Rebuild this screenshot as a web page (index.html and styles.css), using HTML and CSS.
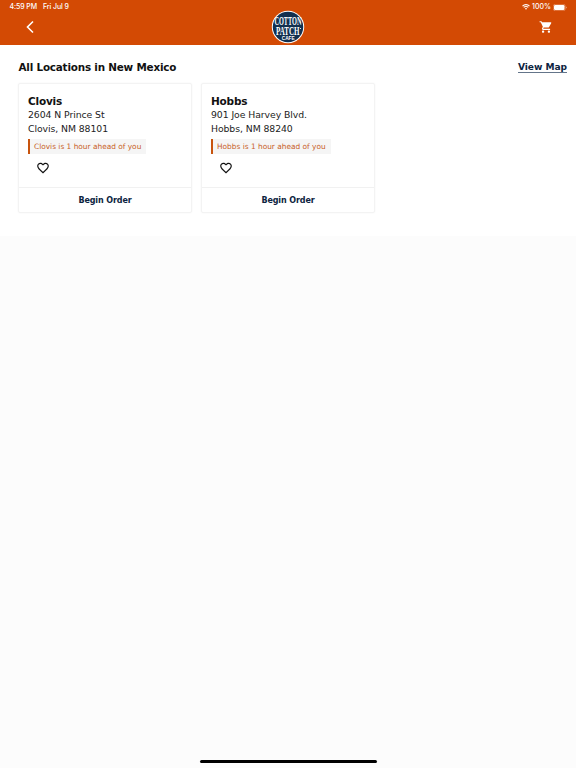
FILE: index.html
```html
<!DOCTYPE html>
<html lang="en">
<head>
<meta charset="utf-8">
<title>Cotton Patch Cafe – Locations</title>
<link rel="stylesheet" href="styles.css">
</head>
<body>
<header class="topbar">
  <div class="status">
    <span class="time">4:59 PM</span>
    <span class="date">Fri Jul 9</span>
    <svg class="wifi" viewBox="0 0 16 12"><path d="M8 11.5 5.7 9a3.3 3.3 0 0 1 4.6 0z" fill="#fff"/><path d="M1 4.2a10 10 0 0 1 14 0M3.4 6.9a6.5 6.5 0 0 1 9.2 0" fill="none" stroke="#fff" stroke-width="2.2"/></svg>
    <span class="percent">100%</span>
    <svg class="battery" viewBox="0 0 28 14"><rect x=".5" y=".5" width="24" height="13" rx="4" fill="none" stroke="#f0b394"/><rect x="2" y="2" width="21" height="10" rx="2.5" fill="#fff"/><path d="M26 5v4q1.5-.6 1.5-2T26 5" fill="#f0b394"/></svg>
  </div>
  <nav class="nav">
    <svg class="back" viewBox="0 0 8 14"><path d="M7 1.5 1.5 7 7 12.5" fill="none" stroke="#fff" stroke-width="1.6"/></svg>
    <svg class="logo" viewBox="0 0 34 34">
      <circle cx="17" cy="17" r="16.2" fill="#fff"/>
      <circle cx="17" cy="17" r="15.2" fill="#12304f"/>
      <g class="logo-text">
        <text x="3.4" y="15.2" font-size="12.5" textLength="27" lengthAdjust="spacingAndGlyphs">COTTON</text>
        <text x="5" y="25" font-size="12.5" textLength="23.5" lengthAdjust="spacingAndGlyphs">PATCH</text>
        <text class="cafe" x="10.7" y="29.6" font-size="4.6" textLength="13" lengthAdjust="spacingAndGlyphs">CAFE</text>
      </g>
      <circle cx="29.5" cy="18.5" r=".6" fill="#fff"/>
    </svg>
    <svg class="cart" viewBox="0 0 24 24"><path fill="#fff" d="M7 18c-1.1 0-1.99.9-1.99 2S5.9 22 7 22s2-.9 2-2-.9-2-2-2zM1 2v2h2l3.6 7.59-1.35 2.45c-.16.28-.25.61-.25.96 0 1.1.9 2 2 2h12v-2H7.42c-.14 0-.25-.11-.25-.25l.03-.12.9-1.63h7.45c.75 0 1.41-.41 1.75-1.03l3.58-6.49A1 1 0 0 0 20 4H5.21l-.94-2H1zm16 16c-1.1 0-1.99.9-1.99 2s.89 2 1.99 2 2-.9 2-2-.9-2-2-2z"/></svg>
  </nav>
</header>
<main class="locations">
  <div class="heading">
    <h1>All Locations in New Mexico</h1>
    <a class="map-link">View Map</a>
  </div>
  <div class="cards">
    <article class="card">
      <div class="info">
        <h2>Clovis</h2>
        <p>2604 N Prince St</p>
        <p>Clovis, NM 88101</p>
        <div class="notice">Clovis is 1 hour ahead of you</div>
        <svg class="heart" viewBox="0 0 24 24"><path d="M16.5 3c-1.74 0-3.41.81-4.5 2.09C10.91 3.81 9.24 3 7.5 3 4.42 3 2 5.42 2 8.5c0 3.78 3.4 6.86 8.55 11.54L12 21.35l1.45-1.32C18.6 15.36 22 12.28 22 8.5 22 5.42 19.58 3 16.5 3zm-4.4 15.55-.1.1-.1-.1C7.14 14.24 4 11.39 4 8.5 4 6.5 5.5 5 7.5 5c1.54 0 3.04.99 3.57 2.36h1.87C13.46 5.99 14.96 5 16.5 5c2 0 3.5 1.5 3.5 3.5 0 2.89-3.14 5.74-7.9 10.05z"/></svg>
      </div>
      <div class="order">Begin Order</div>
    </article>
    <article class="card">
      <div class="info">
        <h2>Hobbs</h2>
        <p>901 Joe Harvey Blvd.</p>
        <p>Hobbs, NM 88240</p>
        <div class="notice">Hobbs is 1 hour ahead of you</div>
        <svg class="heart" viewBox="0 0 24 24"><path d="M16.5 3c-1.74 0-3.41.81-4.5 2.09C10.91 3.81 9.24 3 7.5 3 4.42 3 2 5.42 2 8.5c0 3.78 3.4 6.86 8.55 11.54L12 21.35l1.45-1.32C18.6 15.36 22 12.28 22 8.5 22 5.42 19.58 3 16.5 3zm-4.4 15.55-.1.1-.1-.1C7.14 14.24 4 11.39 4 8.5 4 6.5 5.5 5 7.5 5c1.54 0 3.04.99 3.57 2.36h1.87C13.46 5.99 14.96 5 16.5 5c2 0 3.5 1.5 3.5 3.5 0 2.89-3.14 5.74-7.9 10.05z"/></svg>
      </div>
      <div class="order">Begin Order</div>
    </article>
  </div>
</main>
<div class="home-indicator"></div>
</body>
</html>
```
FILE: styles.css
```css
* { box-sizing: border-box; }
body {
  margin: 0;
  height: 768px;
  display: flex;
  flex-direction: column;
  background: #fcfcfc;
  color: #111;
  font-family: Verdana, "DejaVu Sans", sans-serif;
  overflow: hidden;
}
h1, h2, p { margin: 0; }
svg { display: block; flex: none; }
.topbar { height: 45px; background: #d34a04; color: #fff; }
.status {
  display: flex;
  align-items: center;
  height: 14px;
  padding: 0 9px 0 9.5px;
  font: 500 7px/14px Inter, sans-serif;
}
.time { letter-spacing: -.1px; }
.date { margin-left: 6px; letter-spacing: -.1px; }
.wifi { width: 8px; height: 6px; margin-left: auto; }
.percent { margin: 0 2px 0 2.5px; }
.battery { width: 14px; height: 7px; }
.nav {
  display: grid;
  grid-template-columns: 1fr 34px 1fr;
  grid-template-rows: 26px;
  align-items: center;
  height: 26px;
  padding: 0 23.5px 0 25.5px;
}
.back { width: 8px; height: 14px; }
.logo { width: 34px; height: 34px; margin-left: -1px; }
.logo-text { fill: #fff; font-family: "Liberation Serif", serif; font-weight: 700; }
.cafe { font-family: "Liberation Sans", sans-serif; }
.cart { width: 14px; height: 14px; justify-self: end; }
.locations { height: 191px; padding: 15px 9px 0 18.5px; background: #fff; }
.heading { display: flex; justify-content: space-between; height: 23px; }
h1 { font-size: 10.4px; line-height: 14px; letter-spacing: -.2px; }
.map-link {
  height: 13px;
  border-bottom: 1px solid #64758a;
  color: #0c2340;
  font-size: 9.1px;
  line-height: 14px;
  letter-spacing: -.05px;
  font-weight: 700;
}
.cards { display: flex; gap: 9px; margin-left: -.5px; }
.card {
  width: 174px;
  height: 130px;
  border: 1px solid #f3f3f3;
  border-radius: 2px;
  box-shadow: 0 0 2px rgba(0, 0, 0, .05);
}
.info { height: 104px; padding: 10px 9px 0; border-bottom: 1px solid #f1f1f1; }
h2 { font-size: 10.5px; line-height: 14px; letter-spacing: -.2px; }
p { font-size: 9.3px; line-height: 13.5px; color: #222; letter-spacing: -.07px; }
.notice {
  width: fit-content;
  height: 15px;
  margin-top: 4px;
  padding: 0 5px 0 4px;
  border-left: 2px solid #c8540e;
  background: #f5f5f5;
  color: #c8601f;
  font-size: 7.4px;
  line-height: 16px;
}
.heart { width: 14px; height: 14px; margin: 7px 0 0 8.4px; fill: #111; }
.order {
  height: 25px;
  line-height: 26px;
  color: #0c2340;
  font-size: 8px;
  letter-spacing: -.1px;
  font-weight: 700;
  text-align: center;
}
.home-indicator {
  width: 177px;
  height: 3px;
  margin: auto auto 5px;
  border-radius: 2px;
  background: #000;
}
```
